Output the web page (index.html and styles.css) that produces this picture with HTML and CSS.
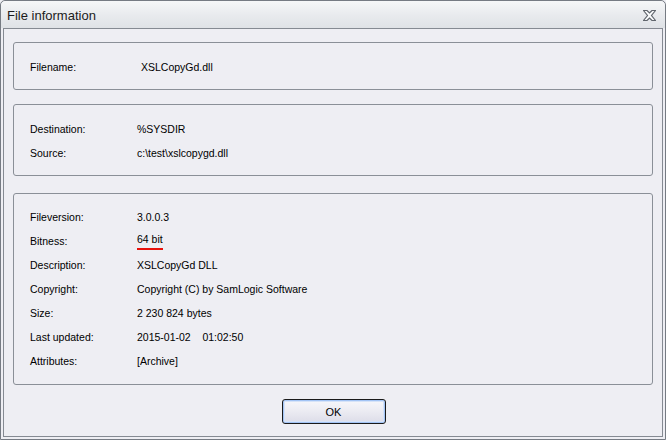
FILE: index.html
```html
<!DOCTYPE html>
<html>
<head>
    <title>File information</title>
    <meta name="viewport" content="width=device-width, initial-scale=1.0">
    <link rel="stylesheet" href="styles.css">
</head>
<body>
    <div class="window">
        <div class="titlebar">
            <span class="title">File information</span>
            <svg class="close" width="13" height="11" viewBox="0 0 13 11">
                <polygon points="0.5,0.5 4,0.5 6.5,3 9,0.5 12.5,0.5 8.5,5.5 12.5,10.5 9,10.5 6.5,8 4,10.5 0.5,10.5 4.5,5.5" fill="#fafbfc" stroke="#60656c" stroke-width="1.2" stroke-linejoin="miter"/>
            </svg>
        </div>
        <div class="panel">
            <div class="group">
                <div class="row">
                    <span class="label">Filename:</span>
                    <span class="value value-shift">XSLCopyGd.dll</span>
                </div>
            </div>

            <div class="group">
                <div class="row">
                    <span class="label">Destination:</span>
                    <span class="value">%SYSDIR</span>
                </div>
                <div class="row">
                    <span class="label">Source:</span>
                    <span class="value">c:\test\xslcopygd.dll</span>
                </div>
            </div>

            <div class="group group-big">
                <div class="row">
                    <span class="label">Fileversion:</span>
                    <span class="value">3.0.0.3</span>
                </div>
                <div class="row">
                    <span class="label">Bitness:</span>
                    <span class="value"><span class="marked">64 bit</span></span>
                </div>
                <div class="row">
                    <span class="label">Description:</span>
                    <span class="value">XSLCopyGd DLL</span>
                </div>
                <div class="row">
                    <span class="label">Copyright:</span>
                    <span class="value">Copyright (C) by SamLogic Software</span>
                </div>
                <div class="row">
                    <span class="label">Size:</span>
                    <span class="value">2 230 824 bytes</span>
                </div>
                <div class="row">
                    <span class="label">Last updated:</span>
                    <span class="value">2015-01-02&nbsp;&nbsp;&nbsp;&nbsp;01:02:50</span>
                </div>
                <div class="row">
                    <span class="label">Attributes:</span>
                    <span class="value">[Archive]</span>
                </div>
            </div>

            <div class="buttons">
                <button class="ok" type="button">OK</button>
            </div>
        </div>
    </div>
</body>
</html>
```

FILE: styles.css
```css
body {
    margin: 0;
    font-family: "Liberation Sans", Arial, sans-serif;
    font-size: 10.5px;
    color: #000;
    background-color: #eeeef3;
}

.window {
    width: 664px;
    height: 438px;
    border: 1px solid #767b83;
    border-radius: 5px 5px 0 0;
    background-color: #eeeef3;
    display: flex;
    flex-direction: column;
}

.titlebar {
    height: 27px;
    display: flex;
    align-items: center;
    justify-content: space-between;
    padding: 0 9px 0 6px;
    border-radius: 5px 5px 0 0;
    background: linear-gradient(#f6f7f8, #e9ebee 50%, #dfe2e6);
}

.title {
    font-size: 13px;
    color: #1b1b1b;
    padding-top: 2px;
}

.close {
    display: block;
    margin-top: 2px;
}

.panel {
    flex: 1;
    margin: 0 2px 2px 2px;
    border: 1px solid #858a92;
    background-color: #eeeef3;
    padding: 13px 9px 0 9px;
    display: flex;
    flex-direction: column;
}

.group {
    border: 1px solid #8a8f97;
    border-radius: 3px;
    padding: 12px 16px 10px 16px;
    margin-bottom: 14px;
}

.group-big {
    margin-top: 3px;
    padding-top: 11px;
    padding-bottom: 11px;
    margin-bottom: 14px;
}

.row {
    display: flex;
    align-items: center;
    height: 24px;
}

.label {
    width: 107px;
    flex-shrink: 0;
}

.value-shift {
    padding-left: 4px;
}

.marked {
    display: inline-block;
    line-height: 13px;
    padding-bottom: 2px;
    border-bottom: 2px solid #e8120c;
}

.buttons {
    display: flex;
    justify-content: center;
}

.ok {
    width: 104px;
    height: 25px;
    margin-left: 1px;
    font-family: "Liberation Sans", Arial, sans-serif;
    font-size: 11px;
    color: #000;
    border: 1px solid #1a1a1a;
    border-radius: 3px;
    box-shadow: inset 0 0 0 1px #a3c4f5, inset 0 0 0 2px #d6e3f8;
    background: linear-gradient(#f7f7fb, #ebebf2 50%, #dcdce8);
    padding: 0;
}
```
